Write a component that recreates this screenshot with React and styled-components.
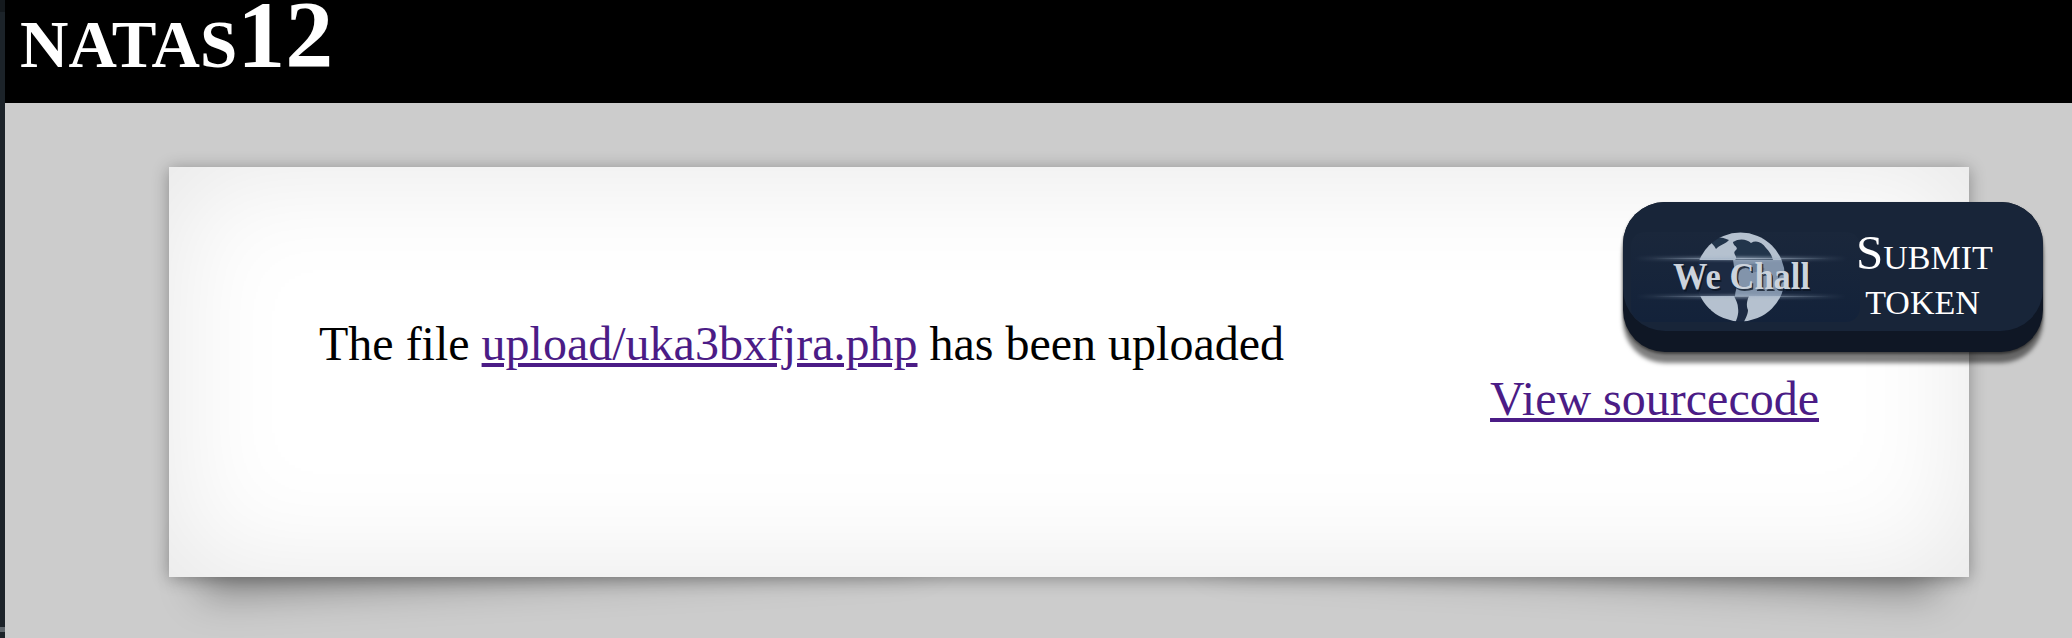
import React from "react";
import styled, { createGlobalStyle } from "styled-components";

const Global = createGlobalStyle`
  html, body { margin: 0; padding: 0; }
  body { background: #cccccc; font-family: "Liberation Serif", serif; overflow: hidden; }
`;

const Page = styled.div`
  position: relative;
  display: flex;
  width: 2072px;
  height: 638px;
  overflow: hidden;
  background: #cccccc;
`;

const SideEdge = styled.div`
  flex: 0 0 5px;
  height: 638px;
  background: linear-gradient(
    to bottom,
    #14191d 0 12px,
    #1c2329 12px 627px,
    #5f666c 627px 632px,
    #1c2329 632px
  );
`;

const Main = styled.div`
  flex: 1;
  min-width: 0;
`;

const Header = styled.header`
  height: 103px;
  background: #000;
  padding-left: 15px;
  box-sizing: border-box;
`;

const Title = styled.h1`
  margin: 0;
  color: #fff;
  font: bold 96px/70px "Liberation Serif", serif;
  font-variant: small-caps;
`;

const Card = styled.main`
  position: relative;
  width: 1800px;
  height: 410px;
  margin: 64px 0 0 164px;
  padding: 149px 150px 0;
  box-sizing: border-box;
  background: #fff;
  box-shadow: 0 2px 16px rgba(0, 0, 0, 0.33), inset 0 0 120px rgba(0, 0, 0, 0.1);
  color: #000;
  font-size: 48px;
  line-height: 55px;

  &::before, &::after {
    content: "";
    position: absolute;
    z-index: -1;
    bottom: 38px;
    width: 40%;
    height: 50px;
    box-shadow: 0 36px 40px rgba(0, 0, 0, 0.36);
  }
  &::before { left: 30px; transform: rotate(-3deg); }
  &::after { right: 30px; transform: rotate(3deg); }
`;

const Layer = styled.div`
  position: relative;
  z-index: 0;
`;

const Link = styled.a`
  color: #4b1c86;
  text-decoration: underline;
`;

const SourceRow = styled.div`
  text-align: right;
`;

const Badge = styled.a`
  position: absolute;
  left: 1623px;
  top: 202px;
  width: 420px;
  height: 150px;
  box-sizing: border-box;
  border-radius: 42px;
  background: #0f1725;
  box-shadow: 0 11px 4px rgba(0, 0, 0, 0.5), 0 2px 3px rgba(0, 0, 0, 0.5);
  text-decoration: none;
`;

const BadgeFace = styled.div`
  display: flex;
  align-items: flex-start;
  height: 129px;
  border-radius: 42px;
  background: #182539;
`;

const Logo = styled.svg`
  display: block;
  flex: 0 0 237px;
  margin-top: 30px;
`;

const BadgeLabel = styled.div`
  width: 133px;
  margin-left: -4px;
  padding-top: 28px;
  color: #fff;
  text-align: center;
  font: 49px/45px "Liberation Serif", serif;
  font-variant: small-caps;
`;

const BadgeLine = styled.div`
  white-space: nowrap;
`;

function WeChallLogo() {
  return (
    <Logo width="237" height="90" viewBox="0 0 237 90">
      <defs>
        <linearGradient id="logobg" x1="0" y1="0" x2="0" y2="1">
          <stop offset="0" stopColor="#1a273b" />
          <stop offset="1" stopColor="#13223a" />
        </linearGradient>
        <linearGradient id="flare" x1="0" y1="0" x2="1" y2="0">
          <stop offset="0" stopColor="#9fb0c4" stopOpacity="0" />
          <stop offset="0.5" stopColor="#a9b8ca" stopOpacity="0.8" />
          <stop offset="1" stopColor="#9fb0c4" stopOpacity="0" />
        </linearGradient>
        <filter id="soft" x="-10%" y="-10%" width="120%" height="120%">
          <feGaussianBlur stdDeviation="0.7" />
        </filter>
        <filter id="halo" x="-10%" y="-200%" width="120%" height="500%">
          <feGaussianBlur stdDeviation="1.5" />
        </filter>
        <clipPath id="earth"><circle cx="117.5" cy="45" r="44.5" /></clipPath>
      </defs>
      <rect x="8" width="229" height="90" rx="14" fill="url(#logobg)" />
      <g clipPath="url(#earth)">
        <g filter="url(#soft)">
          <rect x="70" y="0" width="95" height="28" fill="#b5c1cf" />
          <path d="M85 7 C92 4 100 5 106 8 C103 12 96 13 93 17 C91 13 88 11 85 7 Z" fill="#24344b" />
          <path d="M110 10 C116 6 124 7 128 11 C133 8 139 10 143 16 C147 20 149 24 150 28 L112 28 C116 24 108 22 113 18 C116 15 110 14 110 10 Z" fill="#24344b" />
          <path d="M70 28 H110 C111 36 113 44 116 50 C114 55 112 59 112 64 H70 Z" fill="#1d2c42" />
          <path d="M110 28 H165 V64 H112 C112 59 114 55 116 50 C113 44 111 36 110 28 Z" fill="#8294ab" />
          <path d="M124 33 C131 30 138 33 142 37 C139 40 133 39 129 41 C126 39 124 36 124 33 Z" fill="#6b7e97" />
          <rect x="70" y="64" width="95" height="30" fill="#b5c1cf" />
          <path d="M111 64 C116 64 121 64 126 64 C124 69 123 73 125 78 C125 83 122 87 120 92 L112 92 C114 86 116 82 115 76 C115 72 113 68 111 64 Z" fill="#1d2c42" />
          <path d="M70 64 L76 64 C79 70 82 74 88 78 L78 82 Z" fill="#24344b" />
          <path d="M148 84 C152 76 158 72 165 70 L165 94 L148 94 Z" fill="#1d2c42" />
        </g>
      </g>
      <rect x="12" y="25" width="212" height="3" fill="url(#flare)" filter="url(#halo)" />
      <rect x="12" y="63" width="212" height="3" fill="url(#flare)" filter="url(#halo)" opacity=".8" />
      <rect x="30" y="26" width="177" height="1" fill="url(#flare)" />
      <rect x="30" y="64" width="177" height="1" fill="url(#flare)" opacity=".8" />
      <text x="50" y="57" fontFamily="Liberation Serif, serif" fontWeight="700" fontSize="37" fill="#0b1523" opacity=".75" textLength="137" lengthAdjust="spacingAndGlyphs" transform="translate(1.5 1.5)">We Chall</text>
      <text x="50" y="57" fontFamily="Liberation Serif, serif" fontWeight="700" fontSize="37" fill="#ccd3dc" textLength="137" lengthAdjust="spacingAndGlyphs">We Chall</text>
    </Logo>
  );
}

export default function App() {
  return (
    <Page>
      <Global />
      <SideEdge />
      <Main>
        <Header>
          <Title>natas12</Title>
        </Header>
        <Layer>
          <Card>
            The file <Link href="#">upload/uka3bxfjra.php</Link> has been uploaded
            <SourceRow>
              <Link href="#">View sourcecode</Link>
            </SourceRow>
          </Card>
        </Layer>
      </Main>
      <Badge href="#">
        <BadgeFace>
          <WeChallLogo />
          <BadgeLabel>
            <BadgeLine>Submit</BadgeLine>
            <BadgeLine>token</BadgeLine>
          </BadgeLabel>
        </BadgeFace>
      </Badge>
    </Page>
  );
}
